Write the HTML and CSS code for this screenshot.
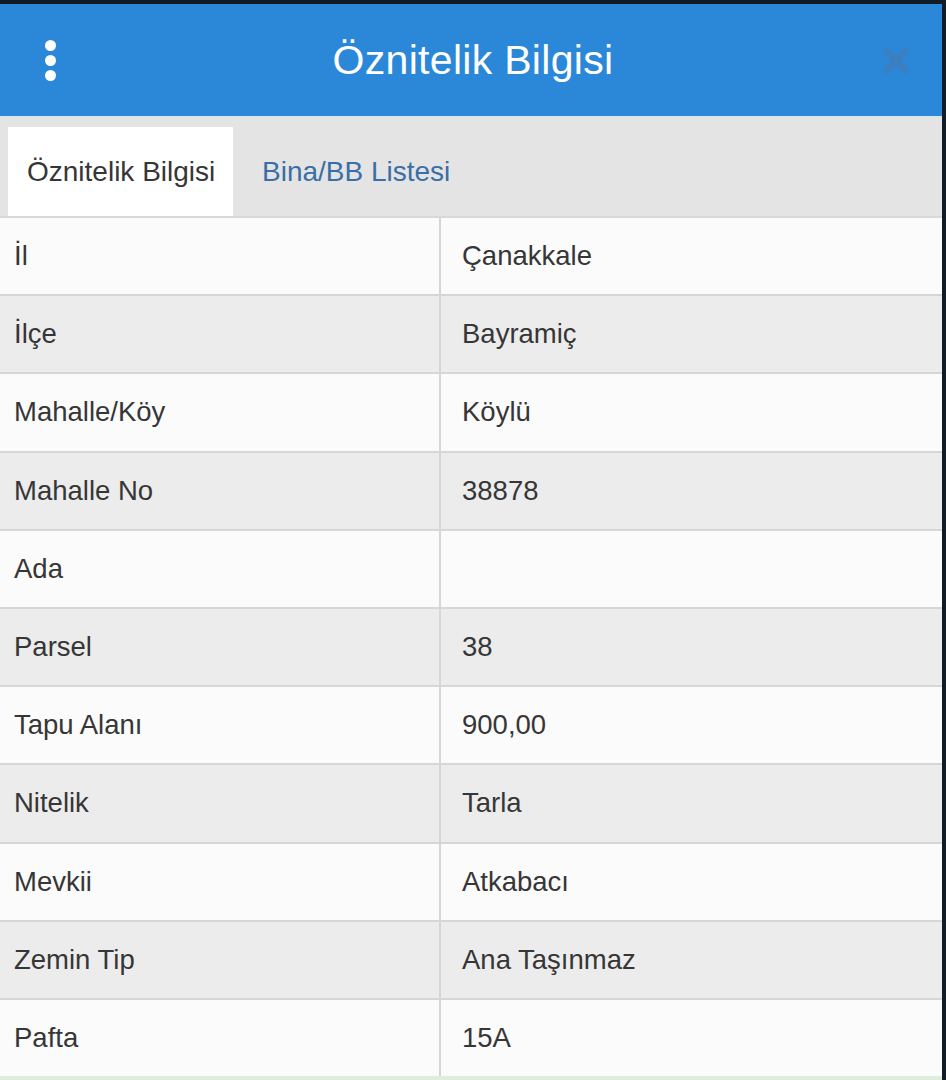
FILE: index.html
```html
<!DOCTYPE html>
<html lang="tr">
<head>
    <meta charset="UTF-8">
    <meta name="viewport" content="width=device-width, initial-scale=1.0">
    <title>Öznitelik Bilgisi</title>
    <link rel="stylesheet" href="styles.css">
</head>
<body>
    <div class="panel">
        <div class="header">
            <button class="menu-btn" aria-label="Menü">
                <span class="dot"></span>
                <span class="dot"></span>
                <span class="dot"></span>
            </button>
            <h1 class="title">Öznitelik Bilgisi</h1>
            <button class="close-btn" aria-label="Kapat">
                <svg width="28" height="28" viewBox="0 0 28 28">
                    <path d="M5 5 L23 23 M23 5 L5 23" stroke="#3b7fc0" stroke-width="7" stroke-linecap="round"/>
                </svg>
            </button>
        </div>

        <div class="tabs">
            <div class="tab active">Öznitelik Bilgisi</div>
            <div class="tab">Bina/BB Listesi</div>
        </div>

        <div class="table">
            <div class="row"><div class="cell label">İl</div><div class="cell value">Çanakkale</div></div>
            <div class="row"><div class="cell label">İlçe</div><div class="cell value">Bayramiç</div></div>
            <div class="row"><div class="cell label">Mahalle/Köy</div><div class="cell value">Köylü</div></div>
            <div class="row"><div class="cell label">Mahalle No</div><div class="cell value">38878</div></div>
            <div class="row"><div class="cell label">Ada</div><div class="cell value"></div></div>
            <div class="row"><div class="cell label">Parsel</div><div class="cell value">38</div></div>
            <div class="row"><div class="cell label">Tapu Alanı</div><div class="cell value">900,00</div></div>
            <div class="row"><div class="cell label">Nitelik</div><div class="cell value">Tarla</div></div>
            <div class="row"><div class="cell label">Mevkii</div><div class="cell value">Atkabacı</div></div>
            <div class="row"><div class="cell label">Zemin Tip</div><div class="cell value">Ana Taşınmaz</div></div>
            <div class="row"><div class="cell label">Pafta</div><div class="cell value">15A</div></div>
        </div>
    </div>
</body>
</html>
```

FILE: styles.css
```css
body {
    margin: 0;
    padding: 0;
    background: #121c26;
    font-family: "Liberation Sans", Arial, sans-serif;
    height: 1080px;
    overflow: hidden;
}
.panel {
    width: 942px;
    margin-top: 4px;
    background: #e4e4e4;
    border-bottom: 4px solid #dcefdc;
}
.header {
    height: 112px;
    background: #2b88d8;
    display: flex;
    align-items: center;
    justify-content: space-between;
    border-bottom: 2px solid #d7e6f3;
}
.menu-btn,
.close-btn {
    background: none;
    border: none;
    padding: 0;
    width: 100px;
    height: 100%;
    display: flex;
    align-items: center;
    justify-content: center;
    cursor: pointer;
}
.menu-btn {
    flex-direction: column;
    gap: 4px;
}
.dot {
    width: 11px;
    height: 11px;
    border-radius: 50%;
    background: #ffffff;
}
.close-btn {
    margin-right: -4px;
    padding-top: 2px;
}
.title {
    margin: 0;
    color: #ffffff;
    font-size: 41px;
    font-weight: normal;
    letter-spacing: 0.3px;
}
.tabs {
    display: flex;
    align-items: stretch;
    height: 89px;
    padding: 9px 0 0 8px;
    background: #e4e4e4;
}
.tab {
    display: flex;
    align-items: center;
    padding: 0 19px;
    font-size: 28px;
    color: #3a6ea6;
    white-space: nowrap;
    margin-right: 10px;
}
.tab.active {
    box-sizing: border-box;
    width: 225px;
    background: #ffffff;
    color: #363636;
}
.table {
    border-top: 2px solid #d8d8d8;
}
.row {
    display: grid;
    grid-template-columns: 441px 1fr;
    height: 76.2px;
    border-bottom: 2px solid #d6d6d6;
    background: #fbfbfb;
}
.row:nth-child(even) {
    background: #ececec;
}
.row:last-child {
    border-bottom: none;
}
.cell {
    display: flex;
    align-items: center;
    font-size: 27.5px;
    color: #363636;
}
.label {
    padding-left: 14px;
    border-right: 2px solid #d6d6d6;
}
.value {
    padding-left: 21px;
}
```
